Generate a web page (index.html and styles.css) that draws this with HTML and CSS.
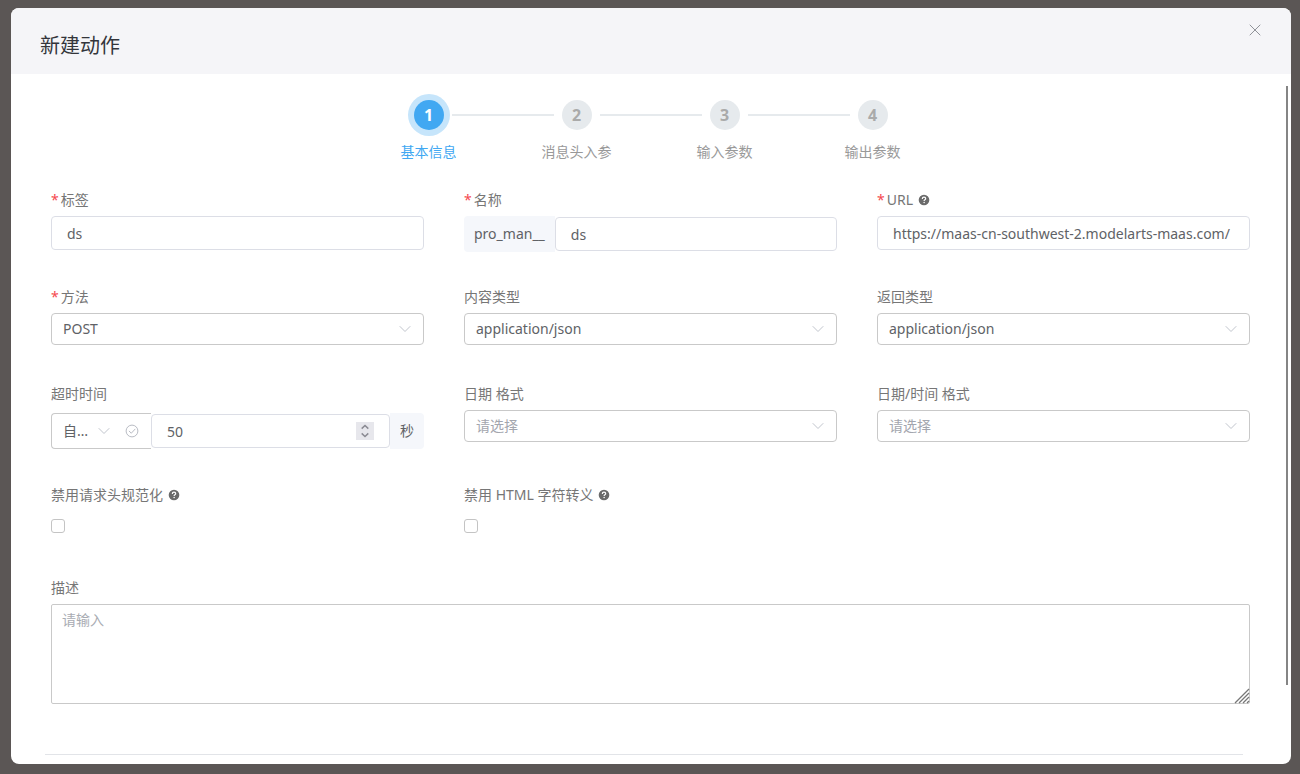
FILE: index.html
```html
<!DOCTYPE html>
<html lang="zh-CN">
<head>
<meta charset="utf-8">
<title>新建动作</title>
<link rel="stylesheet" href="styles.css">
</head>
<body>
<svg class="defs" width="0" height="0" aria-hidden="true">
  <symbol id="chevron" viewBox="0 0 12 12"><path d="M1 3.5 6 8.5 11 3.5" fill="none" stroke="currentColor" stroke-linecap="round" stroke-linejoin="round"/></symbol>
  <symbol id="help" viewBox="0 0 12 12"><circle cx="6" cy="6" r="5.3" fill="currentColor"/><path d="M4.3 4.9c0-1.1.7-1.7 1.7-1.7s1.7.6 1.7 1.5c0 1.1-1.6 1.1-1.6 2.2" fill="none" stroke="#fff" stroke-width="1.2"/><circle cx="6.1" cy="8.6" r=".75" fill="#fff"/></symbol>
</svg>
<main class="modal" role="dialog" aria-labelledby="title">
  <header class="modal-header">
    <h1 class="modal-title" id="title">新建动作</h1>
    <button class="close" type="button" aria-label="关闭"><svg width="12" height="12" viewBox="0 0 12 12"><path d="M1 1 11 11M11 1 1 11" fill="none" stroke="currentColor" stroke-linecap="round"/></svg></button>
  </header>
  <div class="modal-body">
    <ol class="steps">
      <li class="step active"><div class="step-head"><span class="step-num">1</span></div><span class="step-name">基本信息</span></li>
      <li class="step"><div class="step-head"><span class="step-num">2</span></div><span class="step-name">消息头入参</span></li>
      <li class="step"><div class="step-head"><span class="step-num">3</span></div><span class="step-name">输入参数</span></li>
      <li class="step"><div class="step-head"><span class="step-num">4</span></div><span class="step-name">输出参数</span></li>
    </ol>
    <form class="form">
      <div class="field">
        <label class="label required" for="tag">标签</label>
        <input class="input" id="tag" type="text" value="ds">
      </div>
      <div class="field">
        <label class="label required" for="name">名称</label>
        <div class="group">
          <span class="addon addon-start">pro_man__</span>
          <input class="input" id="name" type="text" value="ds">
        </div>
      </div>
      <div class="field">
        <label class="label required" for="url">URL<svg class="help"><use href="#help"/></svg></label>
        <input class="input" id="url" type="text" value="https://maas-cn-southwest-2.modelarts-maas.com/">
      </div>
      <div class="field">
        <label class="label required" for="method">方法</label>
        <div class="select-wrap"><select class="select" id="method"><option>POST</option></select><svg class="chevron"><use href="#chevron"/></svg></div>
      </div>
      <div class="field">
        <label class="label" for="content">内容类型</label>
        <div class="select-wrap"><select class="select" id="content"><option>application/json</option></select><svg class="chevron"><use href="#chevron"/></svg></div>
      </div>
      <div class="field">
        <label class="label" for="return">返回类型</label>
        <div class="select-wrap"><select class="select" id="return"><option>application/json</option></select><svg class="chevron"><use href="#chevron"/></svg></div>
      </div>
      <div class="field">
        <label class="label" for="timeout">超时时间</label>
        <div class="group group-timeout">
          <div class="select-wrap mode">
            <select class="select" aria-label="超时方式"><option>自定义</option></select>
            <svg class="chevron"><use href="#chevron"/></svg>
            <svg class="check" viewBox="0 0 14 14"><circle cx="7" cy="7" r="5.9" fill="none" stroke="currentColor"/><path d="M4.2 7.2 6.3 9.2 10 5.2" fill="none" stroke="currentColor" stroke-linecap="round" stroke-linejoin="round"/></svg>
          </div>
          <div class="number">
            <input class="input" id="timeout" type="number" value="50">
            <svg class="spinner" viewBox="0 0 18 18" aria-hidden="true"><path d="M5.7 6.6 9 3.5 12.3 6.6M5.7 11.4 9 14.5 12.3 11.4" fill="none" stroke="currentColor" stroke-width="1.5"/></svg>
          </div>
          <span class="addon addon-end">秒</span>
        </div>
      </div>
      <div class="field">
        <label class="label" for="date">日期 格式</label>
        <div class="select-wrap"><select class="select empty" id="date"><option>请选择</option></select><svg class="chevron"><use href="#chevron"/></svg></div>
      </div>
      <div class="field">
        <label class="label" for="datetime">日期/时间 格式</label>
        <div class="select-wrap"><select class="select empty" id="datetime"><option>请选择</option></select><svg class="chevron"><use href="#chevron"/></svg></div>
      </div>
      <div class="field">
        <label class="label" for="noheader">禁用请求头规范化<svg class="help"><use href="#help"/></svg></label>
        <input class="checkbox" id="noheader" type="checkbox">
      </div>
      <div class="field">
        <label class="label" for="nohtml">禁用 HTML 字符转义<svg class="help"><use href="#help"/></svg></label>
        <input class="checkbox" id="nohtml" type="checkbox">
      </div>
      <div class="field field-wide">
        <label class="label" for="desc">描述</label>
        <div class="area-wrap">
          <textarea class="textarea" id="desc" placeholder="请输入"></textarea>
          <svg class="grip" viewBox="0 0 16 16" aria-hidden="true"><path d="M1 15 15 1M5 15 15 5M9 15 15 9M13 15 15 13" fill="none" stroke="currentColor" stroke-width="1.3"/></svg>
        </div>
      </div>
    </form>
    <hr class="divider">
    <span class="scroll-thumb"></span>
  </div>
</main>
</body>
</html>
```
FILE: styles.css
```css
* {
  box-sizing: border-box;
}

body {
  display: flex;
  min-height: 100vh;
  margin: 0;
  padding: 8px 9px 10px 11px;
  background: #5b5655;
  color: #606266;
  font: 14px/20px "Noto Sans", "Noto Sans CJK SC", sans-serif;
}

.defs {
  position: absolute;
}

.modal {
  display: flex;
  flex: 1;
  flex-direction: column;
  min-width: 0;
  overflow: hidden;
  border-radius: 8px;
  background: #fff;
}

.modal-header {
  display: flex;
  align-items: flex-start;
  justify-content: space-between;
  padding: 16px 30px 16px 29px;
  background: #f5f5f8;
}

.modal-title {
  margin: 10px 0 0;
  color: #33353b;
  font-size: 20px;
  font-weight: 400;
  line-height: 24px;
}

.close {
  display: flex;
  padding: 0;
  border: 0;
  background: none;
  color: #909399;
}

.modal-body {
  position: relative;
  flex: 1;
  padding: 26px 41px 9px 40px;
}

.steps {
  display: flex;
  justify-content: center;
  margin: 0 0 28px;
  padding: 0;
  list-style: none;
}

.step {
  width: 148px;
  color: #999;
  text-align: center;
}

.step-head {
  display: flex;
  align-items: center;
  gap: 8px;
  margin-bottom: 12px;
}

.step-head::before,
.step-head::after {
  content: "";
  flex: 1;
  height: 2px;
  background: #e6eaed;
}

.step:first-child .step-head::before,
.step:last-child .step-head::after {
  visibility: hidden;
}

.step-num {
  width: 30px;
  border-radius: 50%;
  background: #e6eaed;
  color: #aaa;
  font-size: 16px;
  font-weight: 700;
  line-height: 30px;
}

.step-name {
  display: block;
}

.active {
  color: #41a8f2;
}

.active .step-num {
  background: #41a8f2;
  box-shadow: 0 0 0 6px #c6e5fb;
  color: #fff;
}

.form {
  display: grid;
  grid-template-columns: repeat(3, minmax(0, 1fr));
  grid-template-rows: repeat(2, minmax(62px, auto)) minmax(66px, auto) minmax(58px, auto) auto;
  gap: 35px 40px;
}

.field-wide {
  grid-column: 1 / -1;
}

.label {
  display: flex;
  align-items: center;
  margin-bottom: 6px;
  color: #767676;
}

.required::before {
  content: "*";
  margin-right: 2px;
  color: #f5494f;
}

.help {
  width: 12px;
  height: 12px;
  margin-left: 5px;
  color: #6b6b6b;
}

.input,
.select,
.textarea {
  display: block;
  width: 100%;
  margin: 0;
  border: 1px solid #dcdee6;
  border-radius: 4px;
  background: #fff;
  color: #606266;
  font: inherit;
}

.input {
  height: 34px;
  padding: 0 15px;
}

.select-wrap,
.number,
.area-wrap {
  position: relative;
}

.select {
  height: 32px;
  padding: 0 36px 0 11px;
  border-color: #c9c9c9;
  appearance: none;
}

.empty {
  color: #a3a6ae;
}

.chevron {
  position: absolute;
  top: 10px;
  right: 13px;
  width: 12px;
  height: 12px;
  color: #c0c4cc;
  pointer-events: none;
}

.group {
  display: flex;
  align-items: center;
}

.group-timeout {
  margin-top: 9px;
}

.addon {
  flex: none;
  padding: 0 10px;
  background: #f5f7fb;
  line-height: 36px;
}

.addon-start {
  border-radius: 4px 0 0 4px;
}

.addon-end {
  border-radius: 0 4px 4px 0;
}

.mode {
  flex: none;
  width: 100px;
}

.mode .select {
  height: 36px;
  padding-right: 62px;
  border-right: 0;
  border-radius: 4px 0 0 4px;
  text-overflow: ellipsis;
}

.mode .chevron {
  top: 12px;
  right: 41px;
}

.check {
  position: absolute;
  top: 11px;
  right: 12px;
  width: 14px;
  height: 14px;
  color: #b9bcc4;
}

.number {
  flex: 1;
  min-width: 0;
}

.number .input {
  appearance: textfield;
}

.number .input::-webkit-inner-spin-button {
  appearance: none;
}

.spinner {
  position: absolute;
  top: 8px;
  right: 16px;
  width: 18px;
  height: 18px;
  background: #e7e7ec;
  color: #8b8b93;
}

.checkbox {
  display: block;
  width: 14px;
  height: 14px;
  margin: 14px 0 0;
  border: 1px solid #c4c4c4;
  border-radius: 3px;
  background: #fff;
  appearance: none;
}

.textarea {
  height: 100px;
  padding: 5px 10px;
  border-color: #c9c9c9;
  border-radius: 2px;
  resize: none;
}

.textarea::placeholder {
  color: #a9acb3;
}

.grip {
  position: absolute;
  right: 0;
  bottom: 0;
  width: 16px;
  height: 16px;
  color: #777;
}

.divider {
  height: 1px;
  margin: 50px 7px 0 -6px;
  border: 0;
  background: #e2e4e8;
}

.scroll-thumb {
  position: absolute;
  top: 12px;
  right: 3px;
  bottom: 79px;
  width: 2px;
  background: #858585;
}
```
